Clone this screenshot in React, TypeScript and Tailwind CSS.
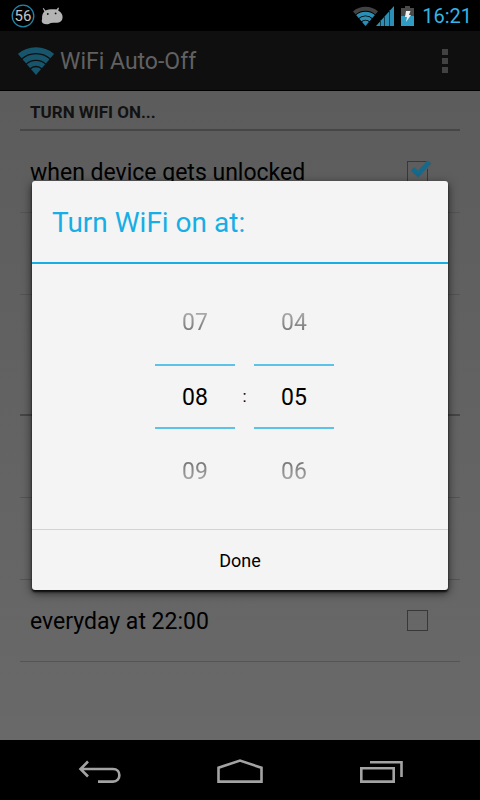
import React, { useId } from "react";

function WifiFan({ className, outer, inner }: { className: string; outer: string; inner: string }) {
  const clip = useId();
  return (
    <svg viewBox="0 0 36 29" className={className} fill="none" aria-hidden="true">
      <clipPath id={clip}>
        <path d="M18 29 L0 8 V0 H36 V8 Z" />
      </clipPath>
      <g clipPath={`url(#${clip})`}>
        <circle cx="18" cy="29" r="24.9" stroke={outer} strokeWidth="5.8" />
        <circle cx="18" cy="29" r="18" stroke={inner} strokeWidth="5.6" />
        <circle cx="18" cy="29" r="11.6" stroke={inner} strokeWidth="4.800" />
        <circle cx="18" cy="29" r="7.8" fill={inner} />
      </g>
    </svg>
  );
}

function StatusBar() {
  return (
    <div className="flex h-[31px] shrink-0 items-center bg-black pl-[11px] pr-2">
      <svg viewBox="0 0 24 24" className="size-6" aria-hidden="true">
        <circle cx="12" cy="12" r="10.8" fill="none" stroke="#2385a8" strokeWidth="1.3" />
        <text x="12" y="17" textAnchor="middle" fontSize="15" fill="#c4c4c4" fontFamily="Roboto, sans-serif">
          56
        </text>
      </svg>
      <svg viewBox="0 0 22 18" className="ml-[6px] h-[18px] w-[22px]" aria-hidden="true">
        <path
          d="M2.6 1 L4.4 3.6 C7 2.2 13 1.8 15.4 2.6 L17.2 0.4 L18 1 L17.2 3.4 C20.5 5 21.8 7.8 21.6 10.6 C21.3 14 19.3 15.8 16.2 15.7 C13.7 15.6 11.4 15.8 9.8 16 C7.5 17.6 4.4 17.6 2.2 16.6 C.4 15.3 .5 13.400 1.1 12 C.9 9.2 1.4 6.4 3.4 4.600 L1.8 1.6 Z"
          fill="#b4b4b4"
        />
        <circle cx="6.8" cy="7" r="0.9" fill="#111" />
        <circle cx="14.6" cy="6.4" r="0.9" fill="#111" />
      </svg>
      <WifiFan className="-mr-[2px] ml-auto h-[20px] w-[25px]" outer="#424242" inner="#2b8fb5" />
      <svg viewBox="0 0 18 20" className="h-5 w-[18px]" aria-hidden="true">
        <path d="M0 20 L18 0 V20 Z" fill="#2b8fb5" />
        <path d="M4.500 14 V20 M8.500 10 V20 M13.500 4 V20" stroke="#0d3c4e" strokeWidth="1" />
      </svg>
      <svg viewBox="0 0 13 20" className="ml-[7px] h-5 w-[13px]" aria-hidden="true">
        <path d="M4 0 H9 V2 H13 V20 H0 V2 H4 Z" fill="#4a4a4a" />
        <path d="M0 10 H13 V20 H0 Z" fill="#2e9cc4" />
        <path d="M5 5 H9.500 L8 9 H10 L5 16 L6 11 H4 Z" fill="#f0f0f0" />
      </svg>
      <span className="ml-2 text-[20px] leading-6 text-[#33b5e5]">16:21</span>
    </div>
  );
}

function ActionBar() {
  return (
    <header className="flex h-[60px] shrink-0 items-center border-b border-black bg-[#0f0f0f] pl-[18px] pr-8">
      <WifiFan className="h-[29px] w-9" outer="#17556c" inner="#17556c" />
      <h1 className="ml-[6px] pt-[2px] text-[23px] leading-8 text-[#616161]">WiFi Auto-Off</h1>
      <button type="button" aria-label="More options" className="ml-auto flex flex-col gap-[3px]">
        <span className="size-[6px] bg-[#424242]" />
        <span className="size-[6px] bg-[#424242]" />
        <span className="size-[6px] bg-[#424242]" />
      </button>
    </header>
  );
}

function SectionHeader({ children }: { children?: React.ReactNode }) {
  return (
    <div className="flex h-10 items-center border-b-2 border-[#464646] px-[10px] pt-1 text-[17px] leading-6 font-bold text-[#121212]">
      {children}
    </div>
  );
}

function Row({ label, checked = false, last = false }: { label?: string; checked?: boolean; last?: boolean }) {
  const id = useId();
  return (
    <div
      className={
        last
          ? "flex h-[81px] items-center justify-between pl-[10px] pr-8"
          : "flex h-[82px] items-center justify-between border-b border-[#545454] pl-[10px] pr-8"
      }
    >
      {label && (
        <>
          <label htmlFor={id} className="pt-[3px] text-[23px] leading-8 text-black">
            {label}
          </label>
          <span className="relative flex">
            <input
              id={id}
              type="checkbox"
              defaultChecked={checked}
              className="peer size-[21px] appearance-none border border-[#383838]"
            />
            <svg
              viewBox="0 0 22 18"
              className="pointer-events-none absolute -top-[1px] left-[3px] hidden h-[18px] w-[22px] peer-checked:block"
              aria-hidden="true"
            >
              <path d="M2.500 9 L8 14.500 L19.500 2.500" fill="none" stroke="#5c5c5c" strokeWidth="6" />
              <path d="M2.500 9 L8 14 L19.500 2" fill="none" stroke="#14698c" strokeWidth="4.500" />
            </svg>
          </span>
        </>
      )}
    </div>
  );
}

const fadeUp = "bg-linear-to-b from-[#b4b4b4] to-[#6c6c6c] bg-clip-text text-transparent";
const fadeDown = "bg-linear-to-b from-[#6c6c6c] to-[#b4b4b4] bg-clip-text text-transparent";

function Picker({ label, prev, value, next }: { label: string; prev: string; value: string; next: string }) {
  return (
    <div className="flex w-20 flex-col text-[23px] leading-7">
      <button type="button" className="h-[84px] pt-[2px]">
        <span className={fadeUp}>{prev}</span>
      </button>
      <input
        aria-label={label}
        defaultValue={value}
        className="h-[65px] w-full border-y-2 border-[#5bc3e8] bg-transparent pt-[2px] text-center text-black outline-none"
      />
      <button type="button" className="h-[84px] pt-[2px]">
        <span className={fadeDown}>{next}</span>
      </button>
    </div>
  );
}

function TimeDialog() {
  return (
    <div className="absolute inset-0 flex items-center justify-center px-8">
      <div
        role="dialog"
        aria-labelledby="dialog-title"
        className="w-full rounded-[3px] bg-[#f4f4f4] shadow-[0_2px_2px_rgba(0,0,0,0.8),0_3px_10px_rgba(0,0,0,0.65)]"
      >
        <h2
          id="dialog-title"
          className="flex h-[83px] items-center border-b-2 border-[#17aee6] px-5 pt-[2px] text-[28px] leading-9 text-[#17aee6]"
        >
          Turn WiFi on at:
        </h2>
        <div className="flex h-[265px] items-center justify-center pl-[9px]">
          <div className="flex items-center">
            <Picker label="Hour" prev="07" value="08" next="09" />
            <span className="w-[19px] text-center text-[17px] text-black">:</span>
            <Picker label="Minute" prev="04" value="05" next="06" />
          </div>
        </div>
        <button
          type="button"
          className="h-[61px] w-full border-t border-[#d2d4d2] pt-[2px] text-[18px] leading-6 text-black"
        >
          Done
        </button>
      </div>
    </div>
  );
}

function NavBar() {
  return (
    <nav className="flex h-[60px] shrink-0 items-center justify-center gap-[94px] bg-black pt-1">
      <button type="button" aria-label="Back">
        <svg viewBox="0 0 46 26" className="h-[26px] w-[46px]" fill="none" stroke="#a3a3a3" strokeWidth="2.600">
          <path d="M11 2.500 L3.5 10 L11 17.500 M4 10 H36 C44.500 10 44.500 22.600 36 22.600 H21" />
        </svg>
      </button>
      <button type="button" aria-label="Home">
        <svg viewBox="0 0 46 26" className="h-[26px] w-[46px]" fill="none" stroke="#a3a3a3" strokeWidth="2.600">
          <path d="M1.500 22.600 V8.800 L23 1.500 L44.500 8.800 V22.600 Z" />
        </svg>
      </button>
      <button type="button" aria-label="Recent apps">
        <svg viewBox="0 0 46 26" className="h-[26px] w-[46px]" fill="none" stroke="#a3a3a3" strokeWidth="2.600">
          <path d="M4.300 9.300 H36.700 V22.600 H4.300 Z M13 3.300 H44.500 V18" />
        </svg>
      </button>
    </nav>
  );
}

export default function App() {
  return (
    <div className="flex h-screen flex-col bg-black font-['Roboto',sans-serif]">
      <StatusBar />
      <div className="relative flex min-h-0 flex-1 flex-col">
        <ActionBar />
        <main className="flex-1 overflow-hidden bg-linear-to-b from-[#5c5c5c] to-[#696969] px-5">
          <SectionHeader>TURN WIFI ON...</SectionHeader>
          <Row label="when device gets unlocked" checked />
          <Row />
          <Row last />
          <SectionHeader />
          <Row />
          <Row />
          <Row label="everyday at 22:00" />
        </main>
        <TimeDialog />
      </div>
      <NavBar />
    </div>
  );
}
